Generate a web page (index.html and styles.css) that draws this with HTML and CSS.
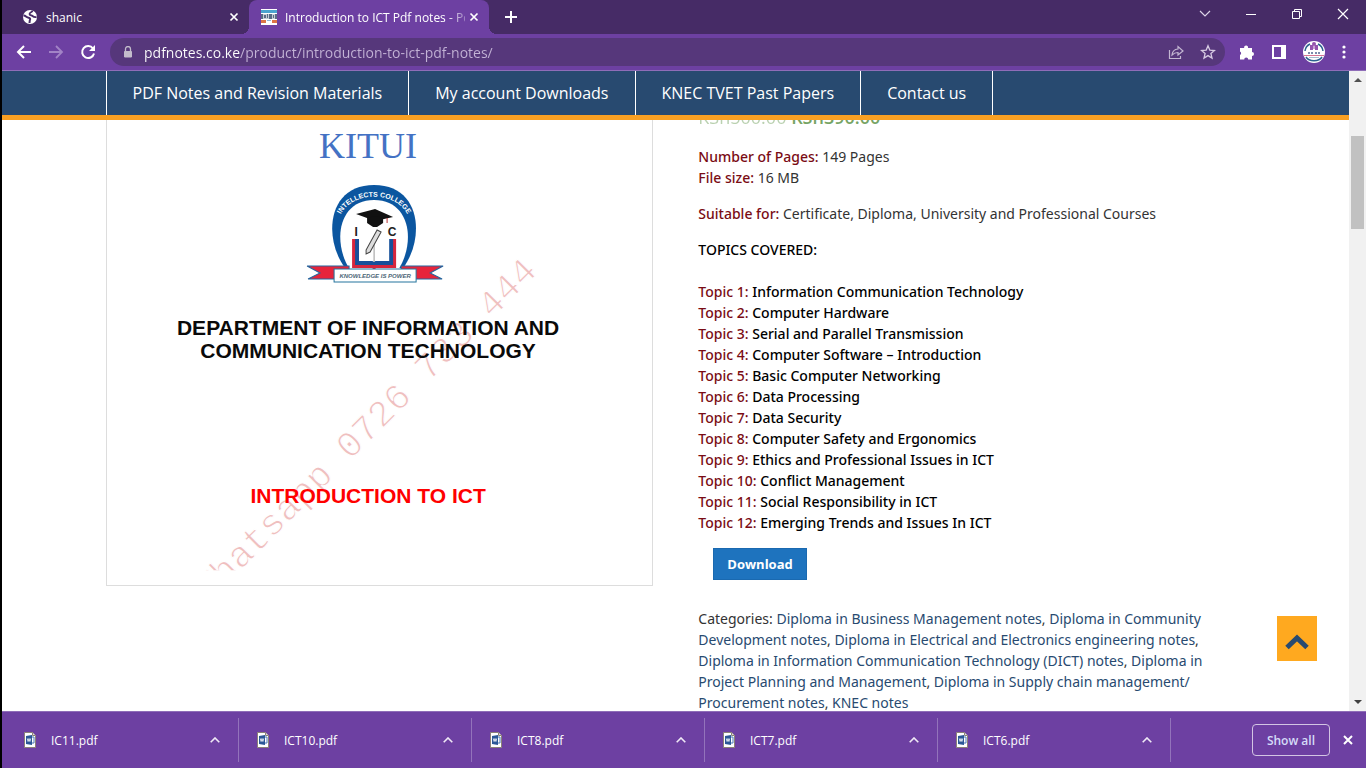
FILE: index.html
```html
<!DOCTYPE html>
<html lang="en">
<head>
<meta charset="utf-8">
<title>Introduction to ICT Pdf notes</title>
<link rel="stylesheet" href="styles.css">
</head>
<body>
<div class="window">
  <header class="tabstrip">
    <div class="tab">
      <svg class="favicon" viewBox="0 0 16 16"><circle cx="8" cy="8" r="7" fill="#fff"/><path d="M1.500 6.500c2.500 0 3 2 5 2.200 1.800.2 2 1.300 1.300 2.500L7.500 14" fill="none" stroke="#462b66" stroke-width="2"/><path d="M10.500 1.500C10.500 3.500 7.500 3 7.500 5c0 1.500 2 1.200 3 2 1 .9 2 1.300 4 1" fill="none" stroke="#462b66" stroke-width="1.800"/></svg>
      <span class="tab-title">shanic</span>
      <button class="icon-btn" aria-label="Close shanic tab"><svg width="10" height="10" viewBox="0 0 10 10"><path d="M1.500 1.500l7 7M8.500 1.500l-7 7" stroke="#fff" stroke-width="1.700"/></svg></button>
    </div>
    <div class="tab tab-active">
      <svg class="favicon" viewBox="0 0 16 16"><path fill="#fff" d="M0 0h16v16H0z"/><path fill="#4ba3cf" d="M0 1h16v3H0z"/><path fill="#c5ccd6" d="M0 5h16v5H0z"/><path fill="#596b86" d="M0 5h2v5H0zM3 6h2v3H3zM6 5h1v4H6zM8 5h3v5H8zM12 6h1v3h-1zM14 5h2v5h-2z"/><path fill="#de7445" d="M0 11h5v3H0zM11 11h5v3h-5z"/><path fill="#8fb7da" d="M6 11h4v1H6z"/></svg>
      <span class="tab-title tab-title-fade">Introduction to ICT Pdf notes - Pc</span>
      <button class="icon-btn" aria-label="Close current tab"><svg width="10" height="10" viewBox="0 0 10 10"><path d="M1.500 1.500l7 7M8.500 1.500l-7 7" stroke="#fff" stroke-width="1.700"/></svg></button>
    </div>
    <button class="icon-btn new-tab" aria-label="New tab"><svg width="12" height="12" viewBox="0 0 12 12"><path d="M6 0v12M0 6h12" stroke="#fff" stroke-width="2"/></svg></button>
    <div class="window-controls">
      <button class="icon-btn" aria-label="Search tabs"><svg width="12" height="12" viewBox="0 0 12 12"><path d="M1 3l5 5 5-5" fill="none" stroke="#ddd4e8" stroke-width="1.200"/></svg></button>
      <button class="icon-btn" aria-label="Minimize"><svg width="12" height="12" viewBox="0 0 12 12"><path d="M1 6.500h10" stroke="#fff"/></svg></button>
      <button class="icon-btn" aria-label="Restore"><svg width="12" height="12" viewBox="0 0 12 12"><path d="M1.500 3.500h7v7h-7zM3.500 3.500v-2h7v7h-2" fill="none" stroke="#fff"/></svg></button>
      <button class="icon-btn" aria-label="Close window"><svg width="12" height="12" viewBox="0 0 12 12"><path d="M1 1l10 10M11 1L1 11" stroke="#fff" stroke-width="1.200"/></svg></button>
    </div>
  </header>

  <div class="toolbar">
    <div class="nav-buttons">
      <button class="icon-btn" aria-label="Back"><svg width="16" height="16" viewBox="0 0 16 16"><path d="M15 8H2M8 2L2 8l6 6" fill="none" stroke="#fff" stroke-width="2"/></svg></button>
      <button class="icon-btn" aria-label="Forward"><svg width="16" height="16" viewBox="0 0 16 16"><path d="M1 8h13M8 2l6 6-6 6" fill="none" stroke="#a283c6" stroke-width="1.800"/></svg></button>
      <button class="icon-btn" aria-label="Reload"><svg width="16" height="16" viewBox="0 0 16 16"><path d="M13 4.500A6 6 0 1 0 14 9.500" fill="none" stroke="#fff" stroke-width="2"/><path d="M15 1v6H9z" fill="#fff"/></svg></button>
    </div>
    <div class="omnibox">
      <svg width="10" height="12" viewBox="0 0 10 12"><path d="M1.500 5.500h7v5.500h-7z" fill="#c3bccb" stroke="#c3bccb"/><path d="M2.500 5V3a2.500 2.500 0 0 1 5 0v2" fill="none" stroke="#c3bccb" stroke-width="1.300"/></svg>
      <input class="url" type="text" aria-label="Address" value="pdfnotes.co.ke/product/introduction-to-ict-pdf-notes/">
      <button class="icon-btn" aria-label="Share"><svg width="16" height="16" viewBox="0 0 16 16"><path d="M1.500 6v8.500h11V12" fill="none" stroke="#c3b6d2" stroke-width="1.200"/><path d="M4 11c.4-4 2.500-5.700 6-6V2.500L15 7l-5 4V8.500C7.500 8.500 5.500 9.500 4 11z" fill="none" stroke="#c3b6d2" stroke-width="1.200"/></svg></button>
      <button class="icon-btn" aria-label="Bookmark"><svg width="16" height="16" viewBox="0 0 16 16"><path d="M8 1.800l1.800 4.300 4.700.4-3.600 3 1.100 4.600L8 11.600l-4 2.500 1.100-4.600-3.600-3 4.700-.4z" fill="none" stroke="#d6cae2" stroke-width="1.300"/></svg></button>
    </div>
    <div class="extensions">
      <button class="icon-btn" aria-label="Extensions"><svg width="16" height="16" viewBox="0 0 16 16"><path d="M1 4h4.200a2 2 0 1 1 3.800 0H13v4a2 2 0 1 1 0 4v3.500H9.200a2 2 0 0 0-4 0H1V11a2 2 0 0 0 0-3.600z" fill="#fff"/></svg></button>
      <button class="icon-btn" aria-label="Side panel"><svg width="14" height="14" viewBox="0 0 14 14"><path d="M0 0h14v14H0z" fill="#fff"/><path d="M2 2h7v10H2z" fill="#6d40a2"/></svg></button>
      <button class="icon-btn" aria-label="Profile"><svg width="22" height="22" viewBox="0 0 22 22"><circle cx="11" cy="11" r="11" fill="#fff"/><path d="M2 10a9 9 0 0 1 5-7M20 10a9 9 0 0 0-5-7M3 16c3 5 13 5 16 0" fill="none" stroke="#2d638f" stroke-width="1.500"/><path d="M7 4h3v5H7zM12 4h3v5h-3z" fill="#9553ae"/><path d="M10 5h2v3h-2z" fill="#c9a4d6"/><circle cx="11" cy="3" r="2" fill="#9553ae"/><path d="M5 11h2v2H5zM8 11h2v2H8zM12 11h2v2h-2zM15 11h2v2h-2z" fill="#7c8bab"/><path d="M1 14h20v1H1z" fill="#d57593"/><path d="M6 16h10v1H6z" fill="#a9bccd"/></svg></button>
      <button class="icon-btn" aria-label="Menu"><svg width="4" height="14" viewBox="0 0 4 14"><g fill="#fff"><circle cx="2" cy="2" r="1.600"/><circle cx="2" cy="7" r="1.600"/><circle cx="2" cy="12" r="1.600"/></g></svg></button>
    </div>
  </div>

  <div class="viewport">
    <div class="page">
      <nav class="site-nav">
        <div class="container nav-links">
          <a href="#notes">PDF Notes and Revision Materials</a>
          <a href="#downloads">My account Downloads</a>
          <a href="#papers">KNEC TVET Past Papers</a>
          <a href="#contact">Contact us</a>
        </div>
      </nav>
      <main class="scroll-area">
        <div class="container product">
          <figure class="cover">
            <svg viewBox="0 0 545 465" role="img" aria-label="Cover page">
              <defs>
                <path id="crest-arc" d="M231 103C236 68 298 68 303 103"/>
                <clipPath id="sheet"><path d="M0 0h545v450H0z"/></clipPath>
              </defs>
              <g clip-path="url(#sheet)"><text class="watermark" transform="translate(102 482) rotate(-45)">Whatsapp 0726 733 444</text></g>
              <text class="cover-place" x="261" y="38">KITUI</text>
              <g class="crest">
                <path d="M238 148C216 118 220 65 267 65s51 53 29 83z" fill="#0b56a0"/>
                <path d="M243 150c-18-28-12-70 24-70s42 42 24 70z" fill="#fff"/>
                <text class="crest-name"><textPath href="#crest-arc" startOffset="50%">INTELLECTS COLLEGE</textPath></text>
                <path d="M245 119h6v25h32v-25h6v29h-20l-2 2-2-2h-20z" fill="#d7263d"/>
                <path d="M248 119h4v22h30v-22h4v26h-38z" fill="#17509a"/>
                <path d="M252 118l3-2c5-1 9 0 12 3 3-3 7-4 12-3l3 2v23c-7-2-12-2-15 1-4-3-9-3-15-1z" fill="#fff"/>
                <path d="M267 119v23" stroke="#999" fill="none"/>
                <path d="M249 94l19-5 18 8-18 4z" fill="#111"/>
                <path d="M260 98c5-2 12-2 16 0v5l-6 4h-4l-6-4z" fill="#111"/>
                <path d="M280 98v5" stroke="#b33"/>
                <text class="crest-letter" x="249" y="116">I</text>
                <text class="crest-letter" x="285" y="116">C</text>
                <path d="M259 130l11-20 4 2-11 20-4 2z" fill="#ddd" stroke="#444"/>
                <path d="M200 146h42v13h-41l12-6zM336 146h-42v13h41l-12-6z" fill="#e6243b" stroke="#24649d"/>
                <path d="M227 149h82v13h-82z" fill="#fff" stroke="#24749d"/>
                <text class="crest-motto" x="268" y="158">KNOWLEDGE IS POWER</text>
              </g>
              <g class="cover-dept"><text x="261" y="215">DEPARTMENT OF INFORMATION AND</text><text x="261" y="238">COMMUNICATION TECHNOLOGY</text></g>
              <text class="cover-title" x="261" y="383">INTRODUCTION TO ICT</text>
            </svg>
          </figure>
          <section class="summary">
            <p class="price"><del>KSh500.00</del> <ins>KSh390.00</ins></p>
            <p><b>Number of Pages:</b> 149 Pages<br><b>File size:</b> 16 MB</p>
            <p><b>Suitable for:</b> Certificate, Diploma, University and Professional Courses</p>
            <h2>TOPICS COVERED:</h2>
            <ul class="topics">
              <li><span>Topic 1:</span> Information Communication Technology</li>
              <li><span>Topic 2:</span> Computer Hardware</li>
              <li><span>Topic 3:</span> Serial and Parallel Transmission</li>
              <li><span>Topic 4:</span> Computer Software – Introduction</li>
              <li><span>Topic 5:</span> Basic Computer Networking</li>
              <li><span>Topic 6:</span> Data Processing</li>
              <li><span>Topic 7:</span> Data Security</li>
              <li><span>Topic 8:</span> Computer Safety and Ergonomics</li>
              <li><span>Topic 9:</span> Ethics and Professional Issues in ICT</li>
              <li><span>Topic 10:</span> Conflict Management</li>
              <li><span>Topic 11:</span> Social Responsibility in ICT</li>
              <li><span>Topic 12:</span> Emerging Trends and Issues In ICT</li>
            </ul>
            <button class="download">Download</button>
            <p class="categories">Categories: <a href="#c1">Diploma in Business Management notes</a>, <a href="#c2">Diploma in Community Development notes</a>, <a href="#c3">Diploma in Electrical and Electronics engineering notes</a>, <a href="#c4">Diploma in Information Communication Technology (DICT) notes</a>, <a href="#c5">Diploma in Project Planning and Management</a>, <a href="#c6">Diploma in Supply chain management/ Procurement notes</a>, <a href="#c7">KNEC notes</a></p>
          </section>
        </div>
      </main>
      <button class="to-top" aria-label="Back to top"><svg width="24" height="16" viewBox="0 0 24 16"><path d="M2 13.500L12 4l10 9.500" fill="none" stroke="#284a70" stroke-width="5"/></svg></button>
    </div>
    <div class="scrollbar">
      <svg width="8" height="4" viewBox="0 0 8 4"><path d="M0 4l4-4 4 4z" fill="#505050"/></svg>
      <div class="track"><div class="thumb"></div></div>
      <svg width="8" height="4" viewBox="0 0 8 4"><path d="M0 0l4 4 4-4z" fill="#404040"/></svg>
    </div>
  </div>

  <footer class="shelf">
    <div class="file"><svg class="doc" viewBox="0 0 12 16"><path d="M.5.5h8l3 3v12H.5z" fill="#fff" stroke="#8b8178"/><path d="M8.500.5v3h3" fill="#ddd" stroke="#8b8178"/><path d="M7 5h3v6H7z" fill="#fff" stroke="#4a7ab8"/><path d="M2 4l6-1v10l-6-1z" fill="#2b5797"/><path d="M3.300 6.500l.8 3 .9-3 .9 3 .8-3" fill="none" stroke="#fff" stroke-width=".8"/></svg><span>IC11.pdf</span><button class="icon-btn" aria-label="Options for IC11.pdf"><svg width="10" height="6" viewBox="0 0 10 6"><path d="M.7 5.300L5 1l4.300 4.300" fill="none" stroke="#f0eaf6" stroke-width="1.600"/></svg></button></div>
    <div class="file"><svg class="doc" viewBox="0 0 12 16"><path d="M.5.5h8l3 3v12H.5z" fill="#fff" stroke="#8b8178"/><path d="M8.500.5v3h3" fill="#ddd" stroke="#8b8178"/><path d="M7 5h3v6H7z" fill="#fff" stroke="#4a7ab8"/><path d="M2 4l6-1v10l-6-1z" fill="#2b5797"/><path d="M3.300 6.500l.8 3 .9-3 .9 3 .8-3" fill="none" stroke="#fff" stroke-width=".8"/></svg><span>ICT10.pdf</span><button class="icon-btn" aria-label="Options for ICT10.pdf"><svg width="10" height="6" viewBox="0 0 10 6"><path d="M.7 5.300L5 1l4.300 4.300" fill="none" stroke="#f0eaf6" stroke-width="1.600"/></svg></button></div>
    <div class="file"><svg class="doc" viewBox="0 0 12 16"><path d="M.5.5h8l3 3v12H.5z" fill="#fff" stroke="#8b8178"/><path d="M8.500.5v3h3" fill="#ddd" stroke="#8b8178"/><path d="M7 5h3v6H7z" fill="#fff" stroke="#4a7ab8"/><path d="M2 4l6-1v10l-6-1z" fill="#2b5797"/><path d="M3.300 6.500l.8 3 .9-3 .9 3 .8-3" fill="none" stroke="#fff" stroke-width=".8"/></svg><span>ICT8.pdf</span><button class="icon-btn" aria-label="Options for ICT8.pdf"><svg width="10" height="6" viewBox="0 0 10 6"><path d="M.7 5.300L5 1l4.300 4.300" fill="none" stroke="#f0eaf6" stroke-width="1.600"/></svg></button></div>
    <div class="file"><svg class="doc" viewBox="0 0 12 16"><path d="M.5.5h8l3 3v12H.5z" fill="#fff" stroke="#8b8178"/><path d="M8.500.5v3h3" fill="#ddd" stroke="#8b8178"/><path d="M7 5h3v6H7z" fill="#fff" stroke="#4a7ab8"/><path d="M2 4l6-1v10l-6-1z" fill="#2b5797"/><path d="M3.300 6.500l.8 3 .9-3 .9 3 .8-3" fill="none" stroke="#fff" stroke-width=".8"/></svg><span>ICT7.pdf</span><button class="icon-btn" aria-label="Options for ICT7.pdf"><svg width="10" height="6" viewBox="0 0 10 6"><path d="M.7 5.300L5 1l4.300 4.300" fill="none" stroke="#f0eaf6" stroke-width="1.600"/></svg></button></div>
    <div class="file"><svg class="doc" viewBox="0 0 12 16"><path d="M.5.5h8l3 3v12H.5z" fill="#fff" stroke="#8b8178"/><path d="M8.500.5v3h3" fill="#ddd" stroke="#8b8178"/><path d="M7 5h3v6H7z" fill="#fff" stroke="#4a7ab8"/><path d="M2 4l6-1v10l-6-1z" fill="#2b5797"/><path d="M3.300 6.500l.8 3 .9-3 .9 3 .8-3" fill="none" stroke="#fff" stroke-width=".8"/></svg><span>ICT6.pdf</span><button class="icon-btn" aria-label="Options for ICT6.pdf"><svg width="10" height="6" viewBox="0 0 10 6"><path d="M.7 5.300L5 1l4.300 4.300" fill="none" stroke="#f0eaf6" stroke-width="1.600"/></svg></button></div>
    <div class="shelf-actions">
      <button class="show-all">Show all</button>
      <button class="icon-btn" aria-label="Close downloads bar"><svg width="10" height="10" viewBox="0 0 10 10"><path d="M1 1l8 8M9 1L1 9" stroke="#fff" stroke-width="2"/></svg></button>
    </div>
  </footer>
</div>
</body>
</html>
```
FILE: styles.css
```css
* { box-sizing: border-box; }
body { margin: 0; background: #000; font-family: "Open Sans", "Noto Sans", sans-serif; }
.window { display: flex; flex-direction: column; height: 100vh; margin-left: 2px; }
svg { display: block; flex: none; }
button { font-family: inherit; cursor: pointer; }
.icon-btn { display: flex; align-items: center; justify-content: center; padding: 0; border: 0; background: none; }

/* Tab strip */
.tabstrip { display: flex; align-items: stretch; height: 34px; background: #462b66; color: #fff; font-size: 12px; }
.tab { display: flex; align-items: center; width: 247px; padding: 0 10px 0 20px; }
.tab-active { position: relative; width: 240px; padding-left: 12px; background: #6d40a2; border-radius: 8px 8px 0 0; }
.tab-active::before, .tab-active::after { content: ""; position: absolute; bottom: 0; width: 8px; height: 8px; }
.tab-active::before { left: -8px; background: radial-gradient(circle at 0 0, transparent 8px, #6d40a2 8px); }
.tab-active::after { right: -8px; background: radial-gradient(circle at 100% 0, transparent 8px, #6d40a2 8px); }
.favicon { width: 16px; height: 16px; margin-right: 8px; }
.tab-title { flex: 1; min-width: 0; overflow: hidden; white-space: nowrap; }
.tab-title-fade { margin-right: 4px; -webkit-mask-image: linear-gradient(to right, #000 90%, transparent 105%); mask-image: linear-gradient(to right, #000 90%, transparent 105%); }
.new-tab { width: 44px; }
.window-controls { display: flex; margin-left: auto; padding-bottom: 6px; }
.window-controls .icon-btn { width: 46px; }

/* Toolbar */
.toolbar { display: flex; align-items: center; height: 37px; padding: 0 14px; background: #6d40a2; border-bottom: 1px solid #8f6db8; }
.nav-buttons { display: flex; gap: 16px; }
.omnibox { display: flex; flex: 1; align-items: center; gap: 16px; height: 28px; margin: 0 14px; padding: 0 9px 0 13px; border-radius: 14px; background: #56377b; }
.url { flex: 1; min-width: 0; padding: 0; margin-left: -5px; border: 0; outline: 0; font-family: inherit; font-size: 14px; color: transparent; background: linear-gradient(to right, #fff 96px, #c3b3d6 96px); -webkit-background-clip: text; background-clip: text; }
.extensions { display: flex; align-items: center; gap: 17px; padding-right: 6px; }

/* Page viewport */
.viewport { display: flex; flex: 1; min-height: 0; background: #fff; }
.page { position: relative; display: flex; flex: 1; flex-direction: column; min-width: 0; }
.container { width: 100%; max-width: 1140px; margin: 0 auto; }
.site-nav { background: #284a70; border-bottom: 5px solid #f9a023; }
.nav-links { display: flex; }
.nav-links a { padding: 0 26px; border-right: 1px solid #fff; color: #fff; font-size: 16px; line-height: 44px; text-decoration: none; }
.nav-links a:first-child { border-left: 1px solid #fff; }
.scroll-area { flex: 1; min-height: 0; overflow: hidden; }
.product { display: grid; grid-template-columns: 48% 48%; justify-content: space-between; align-items: start; }
.cover { margin: 0; border: 1px solid #ddd; border-top: 0; }
.cover svg { width: 100%; height: auto; }
.cover text { text-anchor: middle; }
.cover-place { font: 36px "Liberation Serif", serif; fill: #4472c4; }
.cover-dept, .cover-title { font: bold 21px "Liberation Sans", sans-serif; fill: #0a0a0a; }
.cover-title { fill: #f00; }
.cover .watermark { font: 37px "Liberation Mono", monospace; fill: #efbfbf; stroke: #fff; stroke-width: 1; text-anchor: start; }
.crest-name { font: bold 7px "Liberation Sans", sans-serif; fill: #fff; }
.crest-letter { font: bold 12px "Liberation Sans", sans-serif; fill: #222; }
.crest-motto { font: italic bold 6px "Liberation Sans", sans-serif; fill: #4c6677; }

/* Product summary */
.summary { color: #333; font-family: "Noto Sans", "Open Sans", sans-serif; font-size: 14px; line-height: 21px; }
.summary p { margin: 0 0 15px; }
.summary b { color: #7a0c14; font-weight: 500; }
.summary .price { margin-top: -17px; color: #77a464; font-family: "Open Sans", sans-serif; font-size: 18px; line-height: 28px; }
.price del { opacity: .5; }
.price ins { font-weight: 600; text-decoration: none; }
.summary h2 { margin: 0 0 21px; color: #000; font-size: 14px; font-weight: 500; line-height: 21px; }
.topics { margin: 0; padding: 0; list-style: none; color: #000; font-weight: 500; }
.topics span { color: #7a0c14; }
.download { height: 32px; margin: 15px 0 28px 15px; padding: 0 13px; border: 1px solid #1a69b0; background: #1e73be; color: #fff; font-family: "Open Sans", sans-serif; font-size: 13px; font-weight: 700; }
.summary a { color: #284a70; text-decoration: none; }
.to-top { position: absolute; right: 32px; bottom: 50px; display: flex; align-items: center; justify-content: center; width: 40px; height: 45px; padding: 6px 0 0; border: 0; background: #ffa91f; }

/* Scrollbar */
.scrollbar { display: flex; flex-direction: column; align-items: center; width: 17px; padding: 7px 0; background: #f1f1f1; }
.track { flex: 1; width: 13px; padding: 54px 0 7px; }
.thumb { height: 93px; background: #c1c1c1; }

/* Downloads shelf */
.shelf { display: flex; height: 57px; padding: 6px 13px 6px 3px; border-top: 1px solid #8f6db8; background: #6d40a2; color: #fff; font-size: 12px; }
.file { display: flex; align-items: center; flex: 0 1 234px; min-width: 0; padding: 0 18px 0 19px; border-right: 1px solid #9373bb; }
.file + .file { flex-basis: 233px; padding-left: 18px; }
.file span { flex: 1; margin-left: 15px; }
.doc { width: 12px; height: 16px; }
.shelf-actions { display: flex; align-items: center; gap: 13px; margin-left: auto; }
.show-all { height: 32px; padding: 0 14px; border: 1px solid #d3c5e3; border-radius: 4px; background: none; color: #d5dcf8; font-size: 12px; font-weight: 600; }
```
